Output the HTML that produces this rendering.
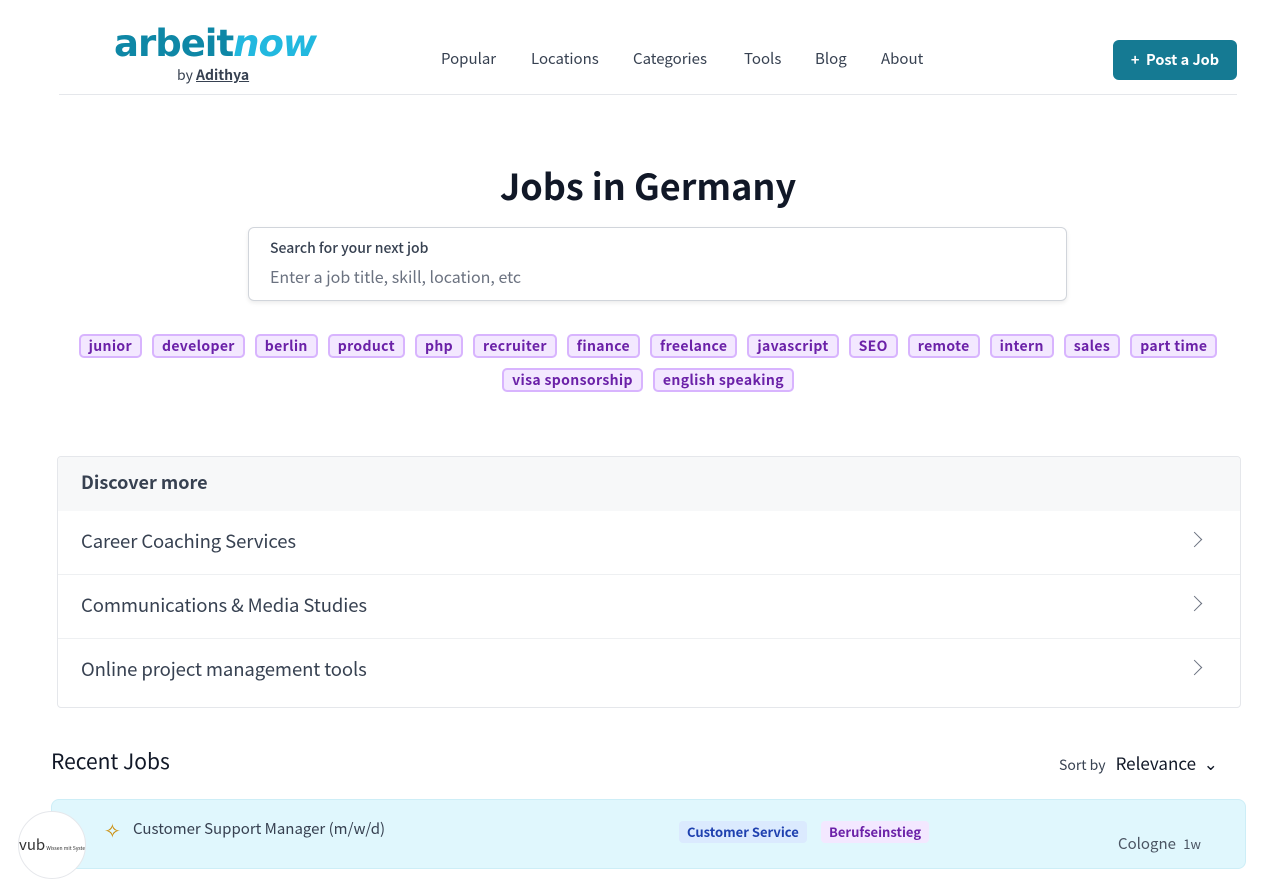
<!DOCTYPE html>
<html><head><meta charset="utf-8"><style>
*{box-sizing:border-box;margin:0;padding:0}
html,body{width:1280px;height:853px;overflow:hidden}
body{background:#fff;font-family:"Noto Sans CJK JP","Liberation Sans",sans-serif;color:#1f2937}
.hdr{position:absolute;left:59px;top:0;width:1178px;height:95px;border-bottom:1px solid #e5e7eb}
.logo{position:absolute;left:55px;top:20px;font-size:37px;font-weight:bold;letter-spacing:-1px;color:#0e87a6;line-height:48px;font-family:"DejaVu Sans",sans-serif}
.logo i{color:#22b8df;font-style:oblique}
.by{position:absolute;left:118px;top:65px;font-size:14px;color:#374151;line-height:20px}
.by b{font-weight:600;text-decoration:underline}
.nav{position:absolute;top:49px;font-size:15px;color:#374151;line-height:20px}
.post{position:absolute;left:1054px;top:40px;width:124px;height:40px;background:#157a93;border-radius:6px;color:#fff;font-size:14.5px;font-weight:600;line-height:40px;text-align:center}
h1{position:absolute;top:160px;width:100%;text-align:center;font-size:36px;font-weight:700;color:#111827;line-height:50px;padding-left:16px}
.search{position:absolute;left:248px;top:227px;width:819px;height:74px;border:1px solid #d1d5db;border-radius:6px;box-shadow:0 2px 4px rgba(0,0,0,.08)}
.search .l{position:absolute;left:21px;top:10px;font-size:14px;font-weight:500;color:#374151}
.search .p{position:absolute;left:21px;top:36px;font-size:16px;color:#6b7280}
.tags{position:absolute;left:60px;width:1176px;display:flex;justify-content:center;gap:10px}
.tag{height:24px;padding:0 8px;border:2px solid #d8b4fe;background:#f3e8ff;border-radius:5px;color:#6b21a8;font-size:14px;font-weight:600;line-height:20px;letter-spacing:.35px}
.disc{position:absolute;left:57px;top:456px;width:1184px;height:252px;border:1px solid #e5e7eb;border-radius:4px;overflow:hidden}
.dh{height:54px;background:#f7f8f9;padding-left:23px;font-size:18px;font-weight:600;line-height:50px;color:#374151}
.row{height:64px;border-bottom:1px solid #eef0f2;padding-left:23px;font-size:18.5px;line-height:60px;color:#374151;position:relative;letter-spacing:-.1px}
.row:after{content:"";position:absolute;right:40px;top:23px;width:10px;height:10px;border-right:1.4px solid #6b7280;border-top:1.4px solid #6b7280;transform:rotate(45deg)}
.rj{position:absolute;left:51px;top:746px;font-size:21px;color:#111827}
.sort{position:absolute;left:1059px;top:750px;font-size:14px;color:#374151}
.sort span{font-size:17px;color:#111827;margin-left:10px}
.card{position:absolute;left:51px;top:799px;width:1195px;height:70px;background:#e0f7fd;border:1px solid #cdeef7;border-radius:8px}
.av{position:absolute;left:18px;top:811px;width:68px;height:68px;border-radius:50%;background:#fff;border:1px solid #e5e7eb;overflow:hidden;white-space:nowrap;font-size:15px;line-height:66px;color:#333}
.b{position:absolute;top:821px;height:22px;padding:0 8px;border-radius:4px;font-size:13px;font-weight:600;line-height:22px}
</style></head><body>
<div class="hdr">
<div class="logo">arbeit<i>now</i></div>
<div class="by">by <b>Adithya</b></div>
<div class="nav" style="left:382px">Popular</div>
<div class="nav" style="left:472px">Locations</div>
<div class="nav" style="left:574px">Categories</div>
<div class="nav" style="left:685px">Tools</div>
<div class="nav" style="left:756px">Blog</div>
<div class="nav" style="left:822px">About</div>
<div class="post">+&nbsp; Post a Job</div>
</div>
<h1>Jobs in Germany</h1>
<div class="search"><div class="l">Search for your next job</div><div class="p">Enter a job title, skill, location, etc</div></div>
<div class="tags" style="top:334px"><span class="tag">junior</span><span class="tag">developer</span><span class="tag">berlin</span><span class="tag">product</span><span class="tag">php</span><span class="tag">recruiter</span><span class="tag">finance</span><span class="tag">freelance</span><span class="tag">javascript</span><span class="tag">SEO</span><span class="tag">remote</span><span class="tag">intern</span><span class="tag">sales</span><span class="tag">part time</span></div>
<div class="tags" style="top:368px"><span class="tag">visa sponsorship</span><span class="tag">english speaking</span></div>
<div class="disc"><div class="dh">Discover more</div>
<div class="row">Career Coaching Services</div>
<div class="row">Communications &amp; Media Studies</div>
<div class="row" style="border:0">Online project management tools</div></div>
<div class="rj">Recent Jobs</div>
<div class="sort">Sort by<span>Relevance &nbsp;⌄</span></div>
<div class="card"></div>
<div class="av">vub<span style="font-size:5px"> Wissen mit System</span></div>
<div style="position:absolute;left:104px;top:815px;color:#ca8a04;font-size:20px">✧</div>
<div style="position:absolute;left:133px;top:818px;font-size:15px;color:#374151">Customer Support Manager (m/w/d)</div>
<div class="b" style="left:679px;background:#dbeafe;color:#1e40af">Customer Service</div>
<div class="b" style="left:821px;background:#f3e8ff;color:#6b21a8">Berufseinstieg</div>
<div style="position:absolute;left:1118px;top:833px;font-size:15px;color:#4b5563">Cologne <span style="font-size:13px;margin-left:4px">1w</span></div>
</body></html>
